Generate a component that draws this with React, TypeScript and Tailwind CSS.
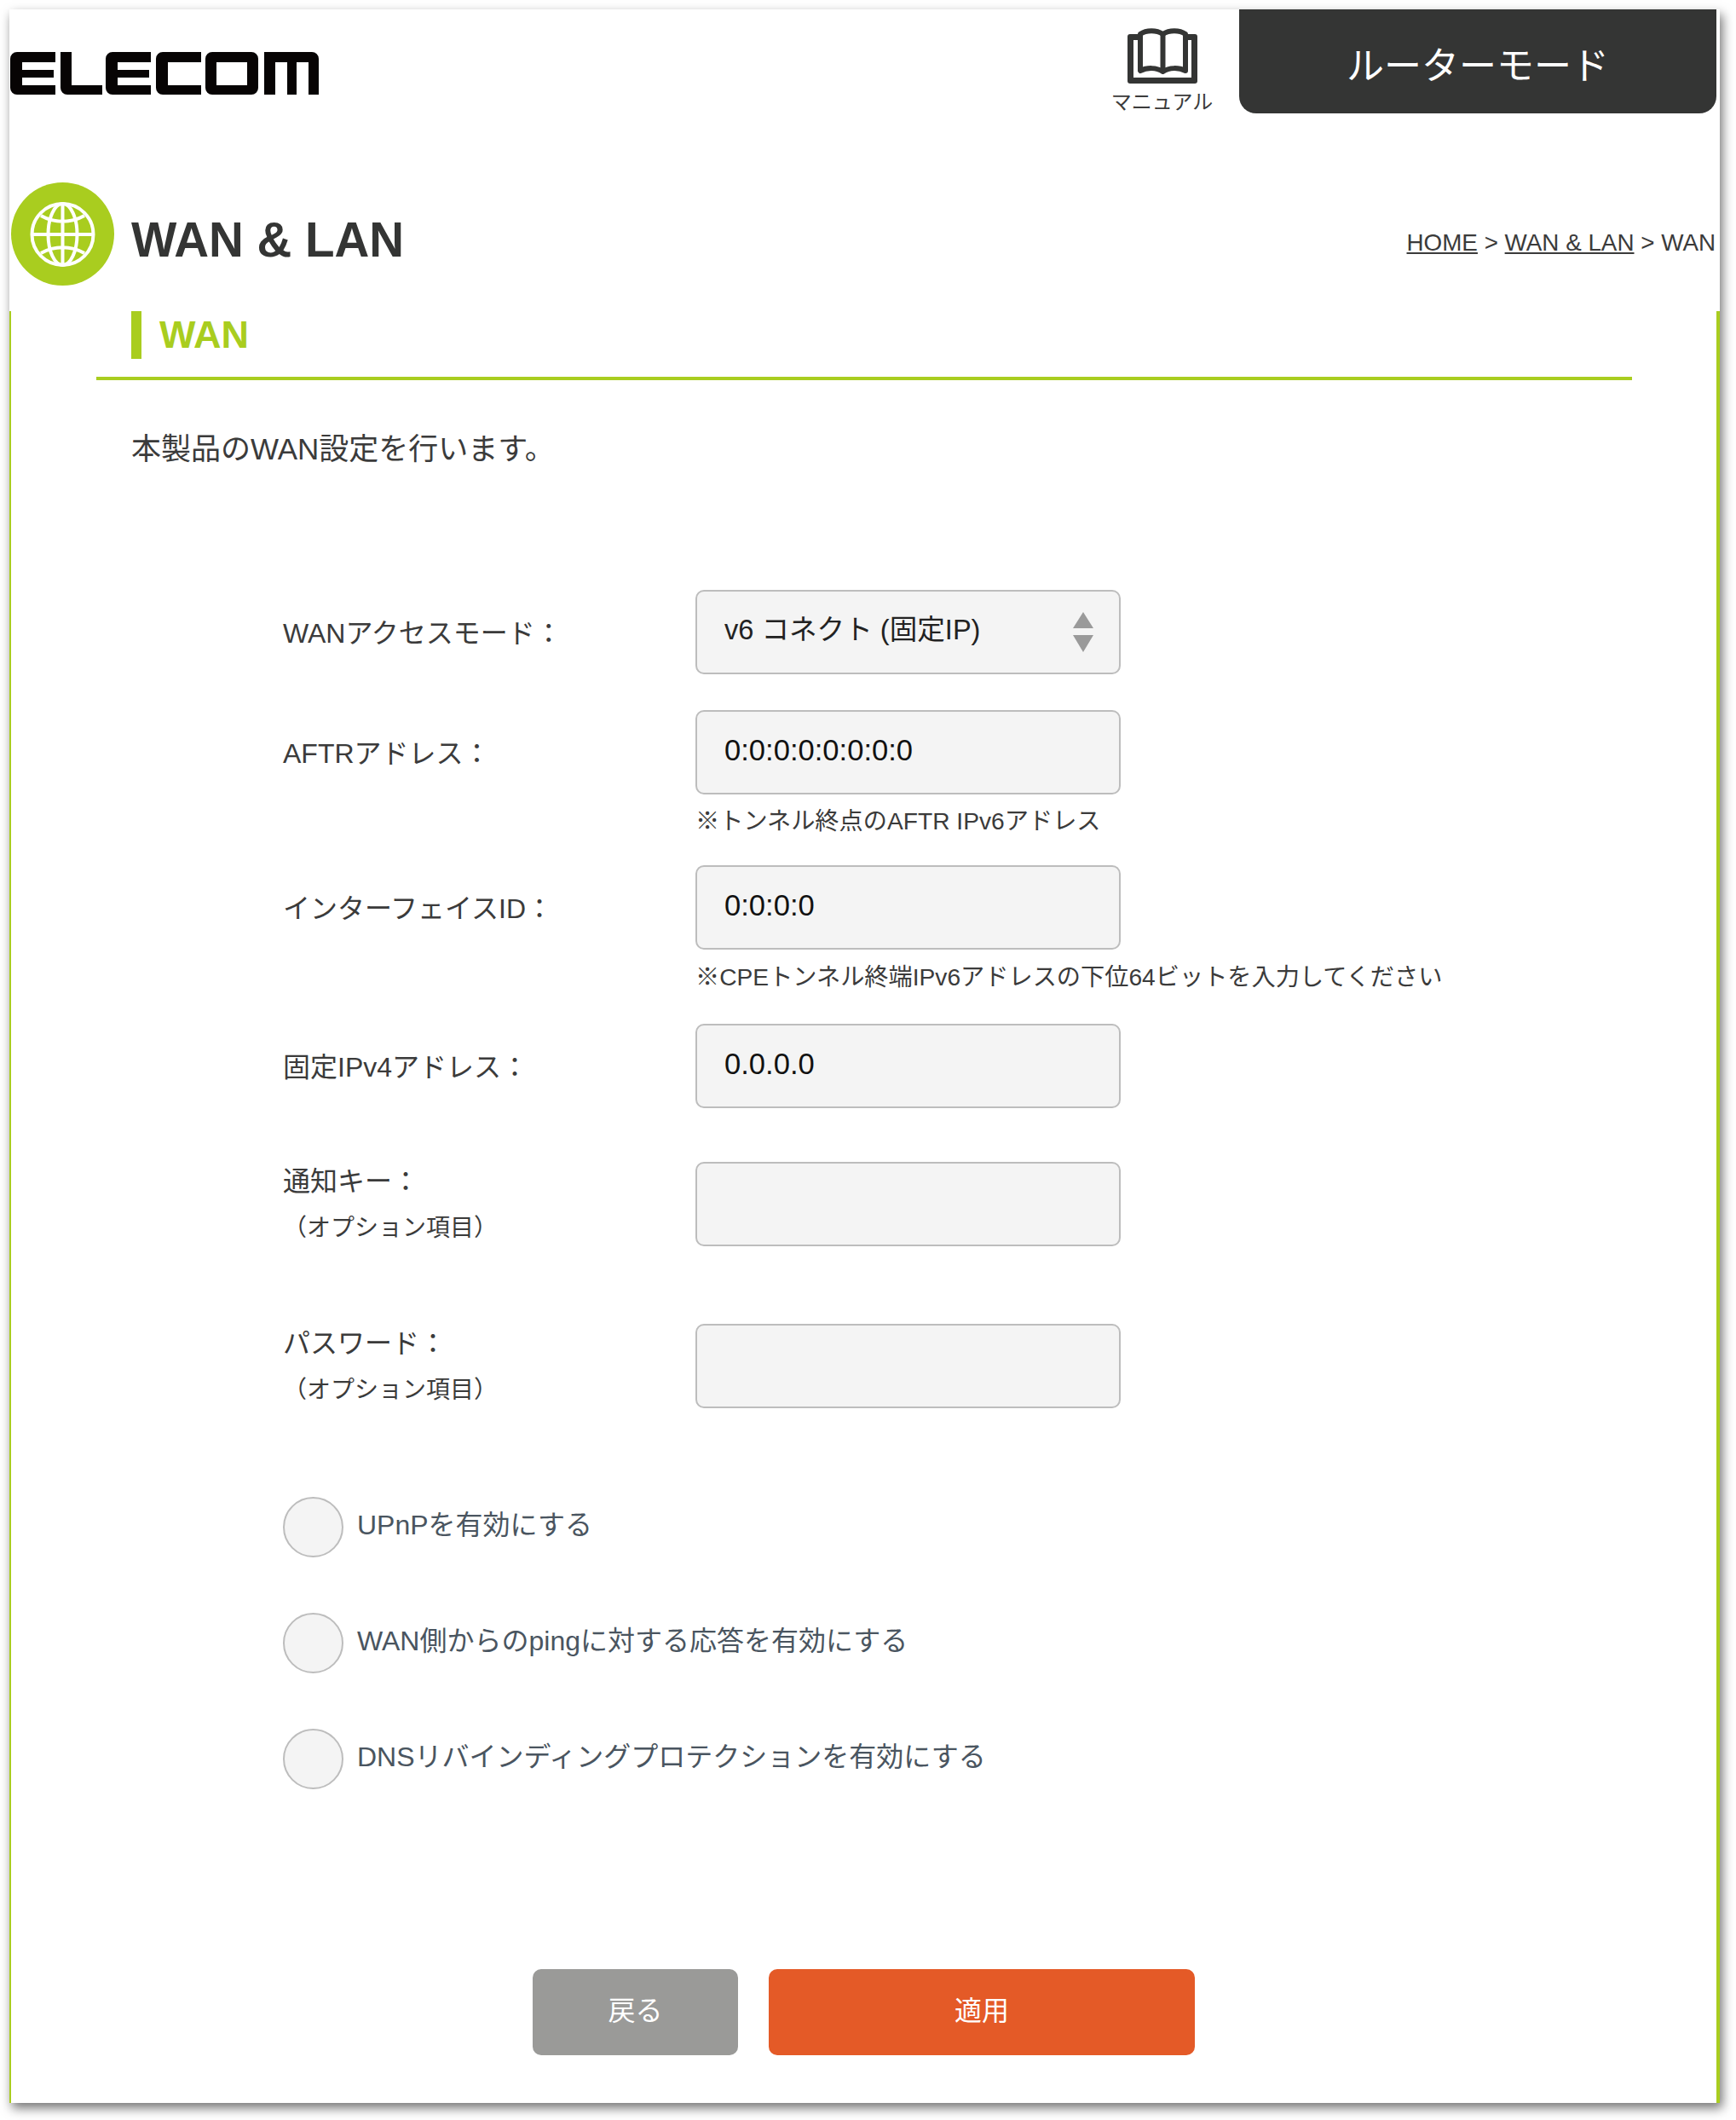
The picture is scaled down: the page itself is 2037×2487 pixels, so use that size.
const font = "font-['Liberation_Sans','Noto_Sans_CJK_JP',sans-serif]"

function BookIcon() {
  return (
    <svg viewBox="0 0 82 65" className="w-[82px] h-[65px]" fill="none">
      <rect x="0" y="7" width="82" height="58" rx="3" fill="#343534" />
      <rect x="7" y="14" width="68" height="44" fill="#fff" />
      <path d="M15 50V7C22 2 34 2 41.5 7C49 2 61 2 68 7V50C60 46 49 46 41.5 51C34 46 23 46 15 50z" fill="#fff" stroke="#343534" strokeWidth="6" strokeLinejoin="round" />
      <path d="M41.5 7v44" stroke="#343534" strokeWidth="6" />
    </svg>
  )
}

function GlobeIcon() {
  return (
    <svg viewBox="0 0 121 121" className="w-[121px] h-[121px] shrink-0">
      <circle cx="60.5" cy="60.5" r="60.5" fill="#a9cd1f" />
      <g fill="none" stroke="#fff" strokeWidth="4">
        <circle cx="60.5" cy="61" r="36" />
        <ellipse cx="60.5" cy="61" rx="17" ry="36" />
        <path d="M60.5 25v72M25 61h71M35 39c16 9 35 9 51 0M35 83c16-9 35-9 51 0" />
      </g>
    </svg>
  )
}

function TextBox({ value = '' }: { value?: string }) {
  return (
    <div className="w-[499px] h-[99px] shrink-0 flex items-center pl-[32px] pb-[4px] rounded-[10px] border-2 border-[#bdbdbd] bg-[#f4f4f4] text-[34.6px] text-[#111]">
      {value}
    </div>
  )
}

function Row({ label, sub, children }: { label: string; sub?: string; children: React.ReactNode }) {
  return (
    <div className="flex items-start">
      <div className="w-[484px] shrink-0 h-[99px] pt-[2px] flex flex-col justify-center text-[#3b3b3b]">
        <div className="text-[32px] leading-[40px]">{label}</div>
        {sub && <div className="text-[28px] leading-[40px] mt-[15px]">{sub}</div>}
      </div>
      {children}
    </div>
  )
}

function Check({ label }: { label: string }) {
  return (
    <div className="flex items-center gap-[16px] h-[71px]">
      <div className="w-[71px] h-[71px] rounded-full border-2 border-[#bdbdbd] bg-[#f4f4f4]" />
      <span className="text-[32px] text-[#4a5560] mb-[6px]">{label}</span>
    </div>
  )
}

export default function App() {
  return (
    <div className={`${font} w-[2037px] h-[2487px] pl-[11px] pt-[11px] bg-white overflow-hidden`}>
      <div className="w-[2007px] h-[2456px] bg-white shadow-[3px_6px_12px_rgba(0,0,0,0.55)] flex flex-col">
        {/* header */}
        <div className="flex h-[203px] shrink-0">
          <div className="pt-[50px] pl-[1px] grow">
            <svg viewBox="0 0 362 50" className="w-[362px] h-[50px]" fill="#070404">
              <path d="M0 8a8 8 0 0 1 8-8h45v12H14v9h37v9H14v9h39v11H8a8 8 0 0 1-8-8z" />
              <path d="M59 0h13v39h36v11H67a8 8 0 0 1-8-8z" />
              <path d="M112 8a8 8 0 0 1 8-8h45v12h-39v9h37v9h-37v9h39v11h-45a8 8 0 0 1-8-8z" />
              <path d="M171 8a8 8 0 0 1 8-8h45v12h-39v27h39v11h-45a8 8 0 0 1-8-8z" />
              <path fillRule="evenodd" d="M229 8a8 8 0 0 1 8-8h46a8 8 0 0 1 8 8v34a8 8 0 0 1-8 8h-46a8 8 0 0 1-8-8zM242 12v27h36V12z" />
              <path d="M298 0h56a8 8 0 0 1 8 8v42h-12V12h-14v38h-11V12h-14v38h-13z" />
            </svg>
          </div>
          <div className="w-[113px] mr-[34px] mt-[22px] flex flex-col items-center">
            <BookIcon />
            <span className="text-[24px] leading-[30px] mt-[7px] text-[#3b3b3b] whitespace-nowrap">マニュアル</span>
          </div>
          <div className="w-[560px] h-[122px] mr-[4px] bg-[#343534] rounded-b-[20px] flex items-center justify-center text-[44px] text-white pt-[12px]">
            ルーターモード
          </div>
        </div>

        {/* title */}
        <div className="flex items-start h-[151px] shrink-0 pl-[2px] pr-[5px]">
          <GlobeIcon />
          <h1 className="ml-[20px] mt-[36px] text-[56.5px] leading-[64px] font-bold text-[#343534] grow">WAN &amp; LAN</h1>
          <div className="mt-[51px] text-[27.8px] leading-[40px] text-[#3b3b3b]">
            <span className="underline">HOME</span> &gt; <span className="underline">WAN &amp; LAN</span> &gt; WAN
          </div>
        </div>

        {/* content */}
        <div className="grow border-l-2 border-r-4 border-[#a9cd1f] pl-[100px]">
          <div className="w-[1802px] h-[81px] border-b-4 border-[#a9cd1f] pl-[41px]">
            <div className="h-[56px] border-l-[12px] border-[#a9cd1f] pl-[21px] flex items-center text-[45px] font-bold text-[#a9cd1f]">
              WAN
            </div>
          </div>
          <p className="ml-[41px] mt-[59px] text-[35px] leading-[44px] text-[#3b3b3b]">本製品のWAN設定を行います。</p>

          <div className="ml-[219px] mt-[143px]">
            <Row label="WANアクセスモード：">
              <div className="relative w-[499px] h-[99px] shrink-0 flex items-center pl-[32px] pb-[4px] rounded-[10px] border-2 border-[#bdbdbd] bg-[#f4f4f4] text-[32.6px] text-[#222]">
                v6 コネクト (固定IP)
                <svg viewBox="0 0 24 47" className="absolute right-[30px] top-[24px] w-[24px] h-[47px]" fill="#9a9a9a">
                  <path d="M12 0l12 19H0zM0 27h24L12 47z" />
                </svg>
              </div>
            </Row>
            <div className="mt-[42px]">
              <Row label="AFTRアドレス："><TextBox value="0:0:0:0:0:0:0:0" /></Row>
            </div>
            <div className="ml-[484px] h-[83px] flex items-center pb-[20px] text-[28.2px] text-[#3b3b3b]">※トンネル終点のAFTR IPv6アドレス</div>
            <Row label="インターフェイスID："><TextBox value="0:0:0:0" /></Row>
            <div className="ml-[484px] h-[87px] flex items-center pb-[22px] text-[28.2px] text-[#3b3b3b]">※CPEトンネル終端IPv6アドレスの下位64ビットを入力してください</div>
            <Row label="固定IPv4アドレス："><TextBox value="0.0.0.0" /></Row>
            <div className="mt-[63px]"><Row label="通知キー：" sub="（オプション項目）"><TextBox /></Row></div>
            <div className="mt-[91px]"><Row label="パスワード：" sub="（オプション項目）"><TextBox /></Row></div>
            <div className="mt-[104px] flex flex-col gap-[65px]">
              <Check label="UPnPを有効にする" />
              <Check label="WAN側からのpingに対する応答を有効にする" />
              <Check label="DNSリバインディングプロテクションを有効にする" />
            </div>
          </div>

          <div className="ml-[512px] mt-[211px] flex gap-[36px]">
            <button className="w-[241px] h-[101px] pb-[4px] rounded-[10px] bg-[#9a9a98] text-[32px] text-white">戻る</button>
            <button className="w-[500px] h-[101px] pb-[4px] rounded-[10px] bg-[#e45a27] text-[32px] text-white">適用</button>
          </div>
        </div>
      </div>
    </div>
  )
}
